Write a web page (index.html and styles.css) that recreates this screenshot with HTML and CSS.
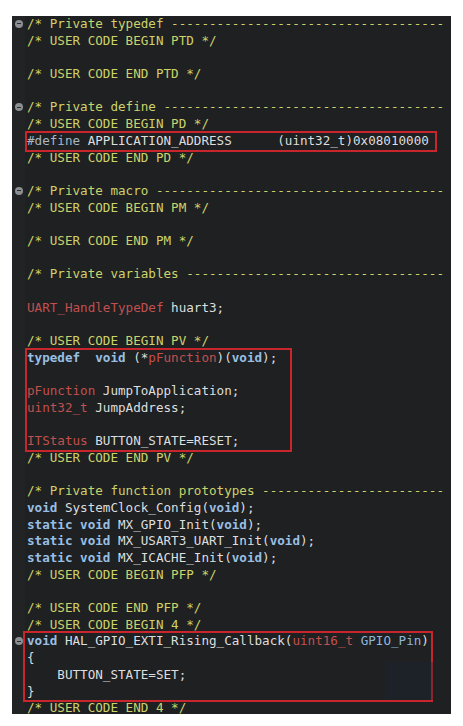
FILE: index.html
```html
<!DOCTYPE html>
<html>
<head>
<meta charset="utf-8">
<link rel="stylesheet" href="styles.css">
</head>
<body>
<div class="editor">
  <div class="gutter">
    <div class="gl"><span class="fold"></span></div>
    <div class="gl"></div><div class="gl"></div><div class="gl"></div><div class="gl"></div>
    <div class="gl"><span class="fold"></span></div>
    <div class="gl"></div><div class="gl"></div><div class="gl"></div><div class="gl"></div>
    <div class="gl"><span class="fold"></span></div>
    <div class="gl"></div><div class="gl"></div><div class="gl"></div><div class="gl"></div>
    <div class="gl"></div><div class="gl"></div><div class="gl"></div><div class="gl"></div>
    <div class="gl"></div><div class="gl"></div><div class="gl"></div><div class="gl"></div>
    <div class="gl"></div><div class="gl"></div><div class="gl"></div><div class="gl"></div>
    <div class="gl"></div><div class="gl"></div><div class="gl"></div><div class="gl"></div>
    <div class="gl"></div><div class="gl"></div><div class="gl"></div><div class="gl"></div>
    <div class="gl"></div><div class="gl"></div>
    <div class="gl"><span class="fold"></span></div>
  </div>
  <div class="code">
    <div class="ln cm">/* Private typedef ------------------------------------</div>
    <div class="ln cm">/* USER CODE BEGIN PTD */</div>
    <div class="ln"> </div>
    <div class="ln cm">/* USER CODE END PTD */</div>
    <div class="ln"> </div>
    <div class="ln cm">/* Private define -------------------------------------</div>
    <div class="ln cm">/* USER CODE BEGIN PD */</div>
    <div class="box box1"><div class="ln"><span class="pp">#define</span> APPLICATION_ADDRESS      (uint32_t)0x08010000</div></div>
    <div class="ln cm">/* USER CODE END PD */</div>
    <div class="ln"> </div>
    <div class="ln cm">/* Private macro --------------------------------------</div>
    <div class="ln cm">/* USER CODE BEGIN PM */</div>
    <div class="ln"> </div>
    <div class="ln cm">/* USER CODE END PM */</div>
    <div class="ln"> </div>
    <div class="ln cm">/* Private variables ----------------------------------</div>
    <div class="ln"> </div>
    <div class="ln"><span class="ty">UART_HandleTypeDef</span> huart3;</div>
    <div class="ln"> </div>
    <div class="ln cm">/* USER CODE BEGIN PV */</div>
    <div class="box box2">
      <div class="ln"><span class="kw">typedef</span>  <span class="kw">void</span> (*<span class="ty">pFunction</span>)(<span class="kw">void</span>);</div>
      <div class="ln"> </div>
      <div class="ln"><span class="ty">pFunction</span> JumpToApplication;</div>
      <div class="ln"><span class="ty">uint32_t</span> JumpAddress;</div>
      <div class="ln"> </div>
      <div class="ln"><span class="ty">ITStatus</span> BUTTON_STATE=RESET;</div>
    </div>
    <div class="ln cm">/* USER CODE END PV */</div>
    <div class="ln"> </div>
    <div class="ln cm">/* Private function prototypes ------------------------</div>
    <div class="ln"><span class="kw">void</span> SystemClock_Config(<span class="kw">void</span>);</div>
    <div class="ln"><span class="kw">static</span> <span class="kw">void</span> MX_GPIO_Init(<span class="kw">void</span>);</div>
    <div class="ln"><span class="kw">static</span> <span class="kw">void</span> MX_USART3_UART_Init(<span class="kw">void</span>);</div>
    <div class="ln"><span class="kw">static</span> <span class="kw">void</span> MX_ICACHE_Init(<span class="kw">void</span>);</div>
    <div class="ln cm">/* USER CODE BEGIN PFP */</div>
    <div class="ln"> </div>
    <div class="ln cm">/* USER CODE END PFP */</div>
    <div class="ln cm">/* USER CODE BEGIN 4 */</div>
    <div class="box box3">
      <div class="ln"><span class="kw">void</span> HAL_GPIO_EXTI_Rising_Callback(<span class="ty">uint16_t</span> <span class="pa">GPIO_Pin</span>)</div>
      <div class="ln">{</div>
      <div class="ln">    BUTTON_STATE=SET;</div>
      <div class="ln">}</div>
    </div>
    <div class="ln cm">/* USER CODE END 4 */</div>
  </div>
  <div class="mark"></div>
</div>
</body>
</html>
```
FILE: styles.css
```css
html, body {
  margin: 0;
  padding: 0;
  background: #ffffff;
}

.editor {
  position: relative;
  display: flex;
  margin: 16px 0 0 12px;
  width: 439px;
  height: 698px;
  background: #1e2022;
  overflow: hidden;
}

.gutter {
  width: 13px;
  flex: none;
  background: #212325;
}

.gl {
  height: 16.7px;
  display: flex;
  align-items: center;
}

.fold {
  display: block;
  width: 8px;
  height: 8px;
  margin-left: 3px;
  margin-top: -1px;
  border-radius: 50%;
  background: #8c8f92;
  position: relative;
}

.fold::after {
  content: "";
  position: absolute;
  left: 2px;
  top: 3.5px;
  width: 4px;
  height: 1px;
  background: #2a2c2e;
}

.code {
  flex: 1;
  min-width: 0;
  padding-left: 2px;
  font-family: "DejaVu Sans Mono", "Liberation Mono", monospace;
  font-size: 12.6px;
  line-height: 16.7px;
  color: #dedede;
}

.ln {
  height: 16.7px;
  white-space: pre;
}

.cm {
  color: #cdd36a;
}

.kw {
  color: #98bfe2;
  font-weight: bold;
}

.ty {
  color: #c2504e;
}

.pp {
  color: #a9b6c4;
}

.pa {
  color: #8db6dc;
}

.box {
  outline: 2px solid #c8262c;
  outline-offset: 0px;
}

.box1 {
  width: 408px;
}

.box2 {
  width: 263px;
}

.box3 {
  width: 404px;
  margin-left: -2px;
  padding-left: 2px;
}

.mark {
  position: absolute;
  left: 373px;
  top: 646px;
  width: 48px;
  height: 38px;
  background: #1c2633;
  opacity: 0.35;
}
```
